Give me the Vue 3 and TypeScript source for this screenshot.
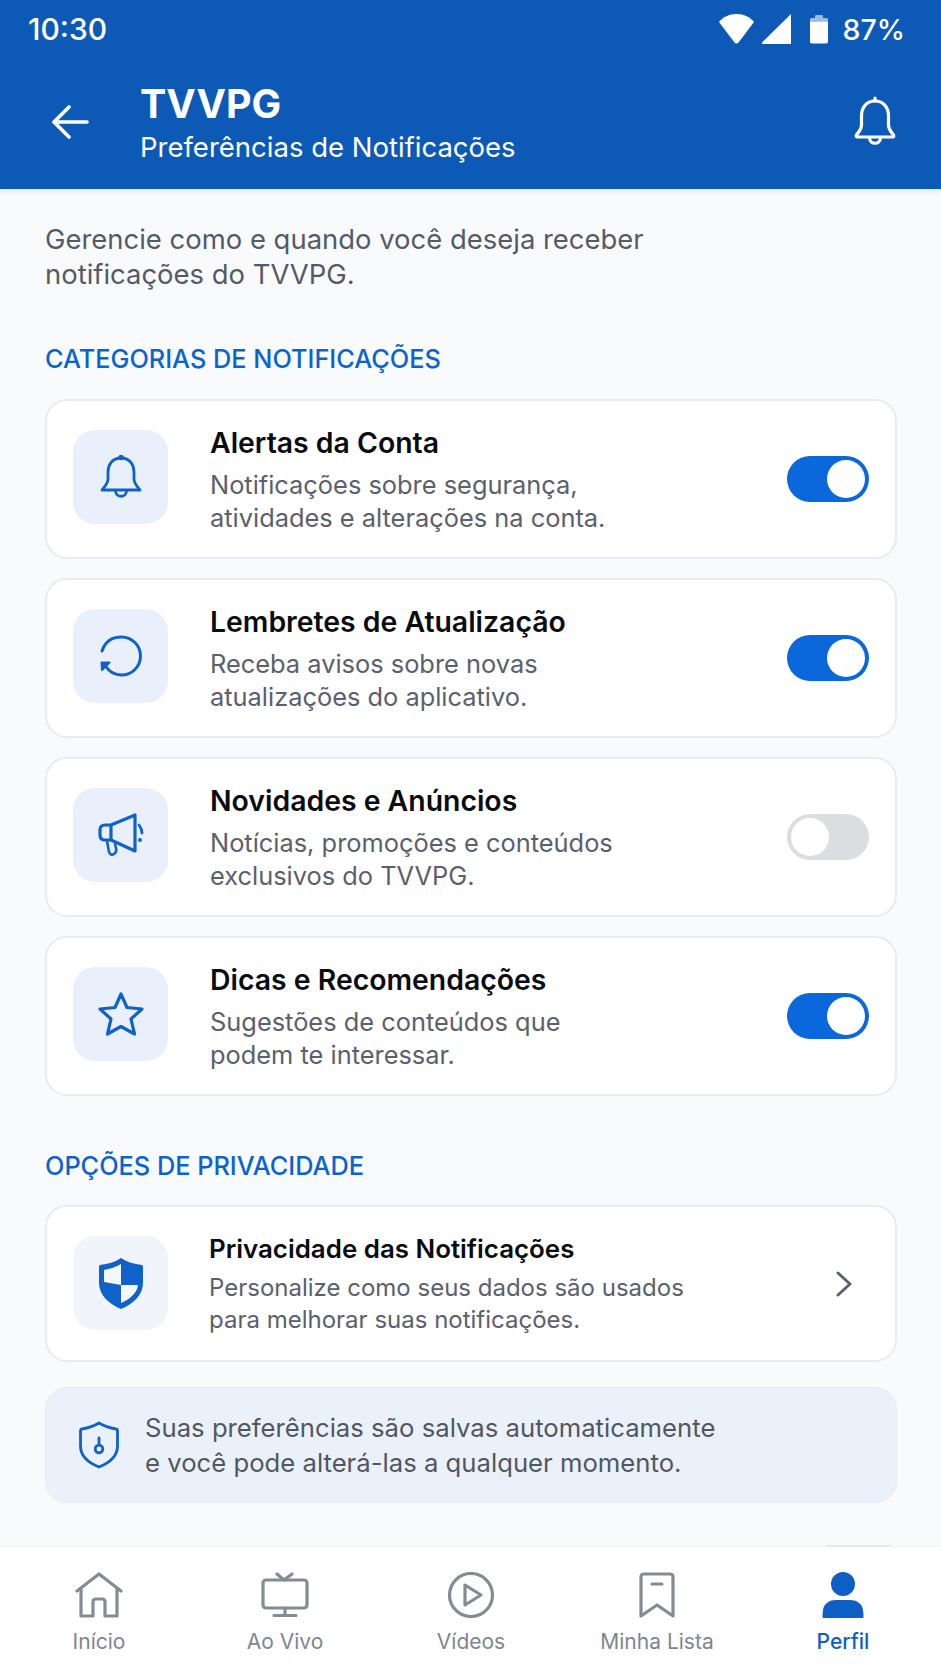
<script setup lang="ts">
interface Row { title: string; lines: string[]; icon: string; on: boolean }
interface Tab { label: string; icon: string; active?: boolean }

const rows: Row[] = [
  { title: 'Alertas da Conta', lines: ['Notificações sobre segurança,', 'atividades e alterações na conta.'], icon: 'bell', on: true },
  { title: 'Lembretes de Atualização', lines: ['Receba avisos sobre novas', 'atualizações do aplicativo.'], icon: 'refresh', on: true },
  { title: 'Novidades e Anúncios', lines: ['Notícias, promoções e conteúdos', 'exclusivos do TVVPG.'], icon: 'mega', on: false },
  { title: 'Dicas e Recomendações', lines: ['Sugestões de conteúdos que', 'podem te interessar.'], icon: 'star', on: true },
]
const tabs: Tab[] = [
  { label: 'Início', icon: 'home' },
  { label: 'Ao Vivo', icon: 'tv' },
  { label: 'Vídeos', icon: 'play' },
  { label: 'Minha Lista', icon: 'mark' },
  { label: 'Perfil', icon: 'user', active: true },
]
</script>

<template>
  <div class="app">
    <header class="top">
      <div class="status">
        <span class="time">10:30</span>
        <div class="status-right">
          <svg class="s-wifi" viewBox="0 0 35 30"><path d="M0 8 C4 3 10 0 17.5 0 C25 0 31 3 35 8 L19.5 28.5 Q17.5 30.5 15.5 28.5 Z" fill="#fff"/></svg>
          <svg class="s-signal" viewBox="0 0 29 30"><path d="M29 0 V30 H1 Q-1 30 0.5 28 Z" fill="#fff"/></svg>
          <svg class="s-batt" viewBox="0 0 20 31"><path d="M6 0 H14 V3 H18 Q20 3 20 5 V29 Q20 31 18 31 H2 Q0 31 0 29 V5 Q0 3 2 3 H6 Z" fill="#fff"/><path d="M6 0 H14 V3 H18 Q20 3 20 5 V7 H0 V5 Q0 3 2 3 H6 Z" fill="#9db9e0"/></svg>
          <span class="pct">87%</span>
        </div>
      </div>
      <div class="bar">
        <svg class="back" viewBox="0 0 37 34" fill="none" stroke="#fff" stroke-width="3.6" stroke-linecap="round" stroke-linejoin="round"><path d="M35 17 H3 M17 2 L2 17 L17 32"/></svg>
        <div class="heading">
          <div class="h-title">TVVPG</div>
          <div class="h-sub">Preferências de Notificações</div>
        </div>
        <svg class="h-bell" viewBox="0 0 42 50" fill="none" stroke="#fff" stroke-width="3.2" stroke-linecap="round" stroke-linejoin="round"><path d="M21 5 C12 5 7.500 12 7.500 20 V29 C7.500 34 4.500 36 2.500 39 Q1.500 41 3.500 41 H38.500 Q40.500 41 39.500 39 C37.500 36 34.500 34 34.500 29 V20 C34.500 12 30 5 21 5 Z"/><path d="M21 5 V2"/><path d="M15.500 42 C16 49 26 49 26.500 42"/></svg>
      </div>
    </header>

    <main class="content">
      <p class="intro">Gerencie como e quando você deseja receber<br />notificações do TVVPG.</p>

      <h2 class="section">CATEGORIAS DE NOTIFICAÇÕES</h2>
      <div class="list">
        <div v-for="r in rows" :key="r.title" class="card">
          <div class="ibox">
            <svg v-if="r.icon === 'bell'" class="ic" viewBox="0 0 42 46" fill="none" stroke="#0f62c9" stroke-width="2.800" stroke-linecap="round" stroke-linejoin="round"><path d="M21 4 C12 4 8 11 8 18 V25 C8 30 4 33 2 36 H40 C38 33 34 30 34 25 V18 C34 11 30 4 21 4 Z"/><circle cx="21" cy="3.500" r="1.400"/><path d="M15.500 37 C16 44 26 44 26.500 37"/></svg>
            <svg v-else-if="r.icon === 'refresh'" class="ic ic-sm" viewBox="0 0 42 42" fill="none" stroke="#0f62c9" stroke-width="3" stroke-linecap="round" stroke-linejoin="round"><path d="M2 16 C5 7 12 2 21.500 2 C32 2 40.500 10.500 40.500 21 C40.500 31.500 32 40 21.500 40 C14.500 40 9 36.500 5.500 31"/><path d="M1.500 27.500 L9.500 27.500 L2 35 Z" fill="#0f62c9" stroke-width="2"/></svg>
            <svg v-else-if="r.icon === 'mega'" class="ic" viewBox="0 0 46 44" fill="none" stroke="#0f62c9" stroke-width="3.200" stroke-linecap="round" stroke-linejoin="round"><path d="M13 12 L37 2 V38 L13 27 H7 Q2 27 2 22 V17 Q2 12 7 12 Z"/><path d="M13 12 V27"/><path d="M9 28 L11 39 Q13 43 16 41 Q19 39 18 35 L17 31" stroke-width="2.600"/><path d="M41 12 Q44 16 44 20" stroke-width="2.800"/><circle cx="42" cy="27" r="2" fill="#0f62c9" stroke="none"/></svg>
            <svg v-else class="ic" viewBox="0 0 46 46" fill="none" stroke="#0f62c9" stroke-width="3.200" stroke-linecap="round" stroke-linejoin="round"><path d="M23 3 L29 16.500 L44 18 L33 28 L36.500 43 L23 35.500 L9.500 43 L13 28 L2 18 L17 16.500 Z"/></svg>
          </div>
          <div class="txt">
            <div class="t">{{ r.title }}</div>
            <div class="d"><div v-for="l in r.lines" :key="l">{{ l }}</div></div>
          </div>
          <div class="toggle" :class="{ on: r.on }"><span class="knob"></span></div>
        </div>
      </div>

      <h2 class="section second">OPÇÕES DE PRIVACIDADE</h2>
      <div class="card priv">
        <div class="ibox pale">
          <svg class="ic" viewBox="0 0 46 52"><path d="M23 1 C29 5 36 7 44 8 Q45 8 45 10 V26 C45 38 35 47 23 52 C11 47 1 38 1 26 V10 Q1 8 2 8 C10 7 17 5 23 1 Z" fill="#0f62c9"/><path d="M6 13 C12 12 18 10 23 7 V28 L6 25 Z M23 28 H40 C39 36 32 42 23 46 Z" fill="#f4f7fc"/></svg>
        </div>
        <div class="txt">
          <div class="t small">Privacidade das Notificações</div>
          <div class="d small"><div>Personalize como seus dados são usados</div><div>para melhorar suas notificações.</div></div>
        </div>
        <svg class="chev" viewBox="0 0 18 26" fill="none" stroke="#5d636e" stroke-width="3" stroke-linecap="round" stroke-linejoin="round"><path d="M3 2 L15 13 L3 24"/></svg>
      </div>

      <div class="info">
        <svg class="info-ic" viewBox="0 0 40 48" fill="none" stroke="#0f62c9" stroke-width="2.800" stroke-linejoin="round" stroke-linecap="round"><path d="M20 2 C25 5 31 7 37 8 Q38.500 8 38.500 10 V25 C38.500 35 30 42 20 46 C10 42 1.500 35 1.500 25 V10 Q1.500 8 3 8 C9 7 15 5 20 2 Z"/><path d="M20 17 V24"/><circle cx="20" cy="28" r="3.800"/></svg>
        <div class="info-t">Suas preferências são salvas automaticamente<br />e você pode alterá-las a qualquer momento.</div>
      </div>
    </main>

    <nav class="nav">
      <span class="peek"></span>
      <div v-for="t in tabs" :key="t.label" class="tab" :class="{ active: t.active }">
        <svg v-if="t.icon === 'home'" class="n-ic" viewBox="0 0 48 46" fill="none" stroke="#858a94" stroke-width="3.200" stroke-linecap="round" stroke-linejoin="round"><path d="M2 19 L24 2 L46 19"/><path d="M6 17 V44 H18 V30 Q18 27 21 27 H27 Q30 27 30 30 V44 H42 V17"/></svg>
        <svg v-else-if="t.icon === 'tv'" class="n-ic" viewBox="0 0 48 46" fill="none" stroke="#858a94" stroke-width="3.200" stroke-linecap="round" stroke-linejoin="round"><rect x="2" y="8" width="44" height="28" rx="3"/><path d="M16 2 L23 8 L31 2"/><path d="M24 36 V43 M13 43.500 H35"/></svg>
        <svg v-else-if="t.icon === 'play'" class="n-ic" viewBox="0 0 48 46" fill="none" stroke="#858a94" stroke-width="3.200" stroke-linecap="round" stroke-linejoin="round"><circle cx="24" cy="23" r="21.500"/><path d="M18 13 L34 23 L18 33 Z"/></svg>
        <svg v-else-if="t.icon === 'mark'" class="n-ic" viewBox="0 0 48 46" fill="none" stroke="#858a94" stroke-width="3.200" stroke-linecap="round" stroke-linejoin="round"><path d="M8 5 Q8 2 11 2 H37 Q40 2 40 5 V44 L24 33 L8 44 Z"/><path d="M19 12 H29"/></svg>
        <svg v-else class="n-ic" viewBox="0 0 48 46"><circle cx="24" cy="12" r="12" fill="#0d5fc6"/><path d="M4 46 Q3 46 4 38 C5 31 11 28 17 28 H31 C37 28 43 31 44 38 Q45 46 44 46 Z" fill="#0d5fc6"/></svg>
        <span class="n-l">{{ t.label }}</span>
      </div>
    </nav>
  </div>
</template>

<style scoped>
.app {
  width: 941px;
  height: 1672px;
  display: flex;
  flex-direction: column;
  overflow: hidden;
  background: #f9fafc;
  font-family: Inter, "Liberation Sans", sans-serif;
}
.top {
  height: 189px;
  flex: none;
  background: #0d5ab6;
  color: #fff;
  box-shadow: 0 2px 6px rgba(30, 50, 90, 0.12);
  position: relative;
  z-index: 1;
}
.status {
  height: 58px;
  display: flex;
  justify-content: space-between;
  align-items: center;
  padding: 0 36px 0 28px;
}
.time { font-size: 30px; font-weight: 500; }
.status-right { display: flex; align-items: center; }
.s-wifi { width: 35px; height: 30px; }
.s-signal { width: 29px; height: 30px; margin-left: 8px; }
.s-batt { width: 18px; height: 31px; margin-left: 19px; }
.pct { font-size: 28.5px; font-weight: 500; margin-left: 14px; }
.bar {
  display: flex;
  align-items: center;
  padding: 0 45px 0 52px;
  height: 118px;
}
.back { width: 37px; height: 34px; flex: none; margin-right: 51px; margin-top: 10px; }
.heading { flex: 1; margin-top: 14px; }
.h-title { font-size: 39.5px; font-weight: 700; line-height: 46px; }
.h-sub { font-size: 27.5px; font-weight: 400; line-height: 40px; }
.h-bell { width: 42px; height: 50px; margin-top: 8px; }

.content { flex: 1; padding: 33px 44px 0 45px; }
.intro {
  margin: 0;
  font-size: 27.45px;
  line-height: 35px;
  color: #555a66;
}
.section {
  margin: 51px 0 0;
  font-size: 25.3px;
  line-height: 32px;
  font-weight: 500;
  color: #0b63ce;
}
.second { margin-top: 54px; }
.list { display: flex; flex-direction: column; gap: 19px; margin-top: 24px; }
.card {
  height: 160px;
  box-sizing: border-box;
  display: flex;
  align-items: center;
  background: #fff;
  border: 2px solid #e9ebf0;
  border-radius: 22px;
  padding: 0 26px 0 26px;
}
.priv { height: 157px; margin-top: 23px; }
.ibox {
  width: 95px;
  height: 94px;
  flex: none;
  border-radius: 22px;
  background: #e9f0fb;
  display: flex;
  align-items: center;
  justify-content: center;
  margin: 0 42px 4px 0;
}
.pale { background: #f1f5fb; margin: 0 41px 2px 0; }
.ic { width: 46px; height: 46px; }
.ic-sm { width: 42px; height: 42px; }
.pale .ic { height: 52px; }
.txt { flex: 1; min-width: 0; padding-top: 1px; }
.t { font-size: 28.4px; font-weight: 600; line-height: 34px; color: #0b0c10; }
.d { font-size: 25.4px; line-height: 33px; color: #5b606c; margin-top: 8px; }
.t.small { font-size: 25.9px; line-height: 32px; }
.d.small { font-size: 24px; line-height: 32px; margin-top: 7px; }
.toggle {
  width: 82px;
  height: 46px;
  flex: none;
  border-radius: 23px;
  background: #dcdde1;
  display: flex;
  align-items: center;
  padding: 0 4px;
  box-sizing: border-box;
}
.toggle.on { background: #0a68dc; justify-content: flex-end; }
.knob { width: 38px; height: 38px; border-radius: 50%; background: #fff; }
.chev { width: 18px; height: 26px; margin-right: 16px; flex: none; }
.info {
  margin-top: 25px;
  height: 116px;
  box-sizing: border-box;
  display: flex;
  align-items: center;
  background: #ebf1fb;
  border: 1px solid #e6ecf6;
  border-radius: 22px;
  padding: 0 0 0 33px;
}
.info-ic { width: 40px; height: 48px; flex: none; margin-right: 26px; }
.info-t { font-size: 25.7px; line-height: 35px; color: #52575f; }

.nav {
  height: 126px;
  flex: none;
  background: #fff;
  border-top: 1px solid #eef0f3;
  box-sizing: border-box;
  display: grid;
  grid-template-columns: repeat(5, 186px);
  padding: 25px 6px 0 6px;
  position: relative;
}
.peek {
  position: absolute;
  top: -2px;
  left: 826px;
  width: 66px;
  height: 2px;
  background: #e8eaee;
  border-radius: 2px 2px 0 0;
}
.tab { display: flex; flex-direction: column; align-items: center; color: #7f8590; }
.tab.active { color: #0d5fc6; font-weight: 500; }
.n-ic { width: 48px; height: 46px; }
.n-l { font-size: 21px; line-height: 28px; margin-top: 10px; }
</style>
